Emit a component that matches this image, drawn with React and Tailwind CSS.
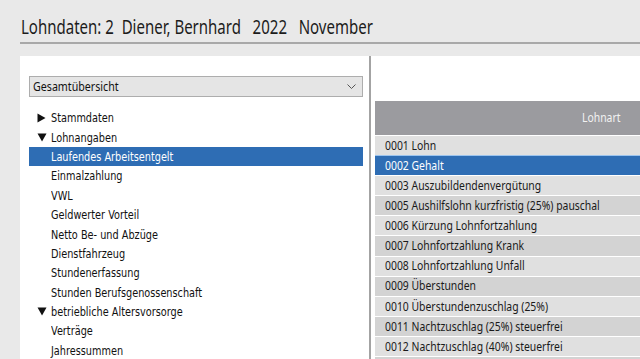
import React from "react";

const tree = [
  { t: "Stammdaten", icon: "right" },
  { t: "Lohnangaben", icon: "down" },
  { t: "Laufendes Arbeitsentgelt", sel: true },
  { t: "Einmalzahlung" },
  { t: "VWL" },
  { t: "Geldwerter Vorteil" },
  { t: "Netto Be- und Abzüge" },
  { t: "Dienstfahrzeug" },
  { t: "Stundenerfassung" },
  { t: "Stunden Berufsgenossenschaft" },
  { t: "betriebliche Altersvorsorge", icon: "down" },
  { t: "Verträge" },
  { t: "Jahressummen" },
];

const rows = [
  "0001 Lohn",
  "0002 Gehalt",
  "0003 Auszubildendenvergütung",
  "0005 Aushilfslohn kurzfristig (25%) pauschal",
  "0006 Kürzung Lohnfortzahlung",
  "0007 Lohnfortzahlung Krank",
  "0008 Lohnfortzahlung Unfall",
  "0009 Überstunden",
  "0010 Überstundenzuschlag (25%)",
  "0011 Nachtzuschlag (25%) steuerfrei",
  "0012 Nachtzuschlag (40%) steuerfrei",
  "",
];

function Tri({ dir }) {
  if (dir === "right")
    return (
      <svg width="9" height="10" viewBox="0 0 9 10" className="shrink-0">
        <path d="M0.5 0.5 L8.5 5 L0.5 9.5 Z" fill="#111" />
      </svg>
    );
  return (
    <svg width="10" height="9" viewBox="0 0 10 9" className="shrink-0">
      <path d="M0.5 0.5 L9.5 0.5 L5 8.5 Z" fill="#111" />
    </svg>
  );
}

export default function App() {
  return (
    <div className="w-[640px] h-[359px] bg-[#e9e9e9] overflow-hidden flex flex-col font-['Noto_Sans',sans-serif]">
      <div className="h-[42px] shrink-0 pl-[21px] flex items-end pb-[2px]">
        <span className="inline-block origin-left scale-x-[0.79] text-[19px] leading-[26px] text-[#1c1c1c] whitespace-pre">
          Lohndaten: 2  Diener, Bernhard   2022   November
        </span>
      </div>
      <div className="ml-[20px] h-[2px] shrink-0 bg-[#a8a8a8]" />
      <div className="h-[12px] shrink-0" />
      <div className="flex-1 flex ml-[20px] min-h-0">
        <div className="w-[349px] bg-white flex flex-col pt-[20px] pl-[9px] pr-[6px]">
          <div className="h-[21px] w-[334px] bg-[#e5e5e5] border border-[#adadad] flex items-center justify-between pl-[3px] pr-[6px]">
            <span className="inline-block origin-left scale-x-[0.82] text-[13px] text-[#111] whitespace-nowrap">
              Gesamtübersicht
            </span>
            <svg width="9" height="6" viewBox="0 0 9 6">
              <path d="M0.5 0.5 L4.5 4.5 L8.5 0.5" fill="none" stroke="#555" strokeWidth="1" />
            </svg>
          </div>
          <div className="mt-[11px] flex flex-col font-['DejaVu_Sans',sans-serif]">
            {tree.map((it, i) => (
              <div
                key={i}
                className={
                  "h-[19.4px] w-[334px] flex items-center text-[12px] " +
                  (it.sel ? "bg-[#2e6db4] text-white" : "text-[#111]")
                }
              >
                <div className="w-[22px] pl-[8px] flex items-center">
                  {it.icon ? <Tri dir={it.icon} /> : null}
                </div>
                <span className="inline-block origin-left scale-x-[0.81] whitespace-nowrap pt-[1px]">{it.t}</span>
              </div>
            ))}
          </div>
        </div>
        <div className="w-[2px] bg-[#a3a3a3]" />
        <div className="flex-1 bg-white pt-[45px] pl-[4px] flex flex-col min-w-0">
          <div className="h-[34px] bg-[#9b9b9f] shrink-0 flex items-center pl-[207px]">
            <span className="inline-block origin-left scale-x-[0.8] text-[13px] text-[#f2f2f2]">Lohnart</span>
          </div>
          <div className="flex flex-col">
            {rows.map((r, i) => (
              <div
                key={i}
                className={
                  "h-[20.1px] shrink-0 border-t border-white flex items-center pl-[10px] " +
                  (i === 1
                    ? "bg-[#2e6db4] text-white border-t-[#9cc4ee]"
                    : i % 2 === 0
                    ? "bg-[#e0e0e0] text-[#1a1a1a]"
                    : "bg-[#d3d3d3] text-[#1a1a1a]")
                }
              >
                <span className="inline-block origin-left scale-x-[0.8] text-[13px] whitespace-nowrap">{r}</span>
              </div>
            ))}
          </div>
        </div>
      </div>
    </div>
  );
}
